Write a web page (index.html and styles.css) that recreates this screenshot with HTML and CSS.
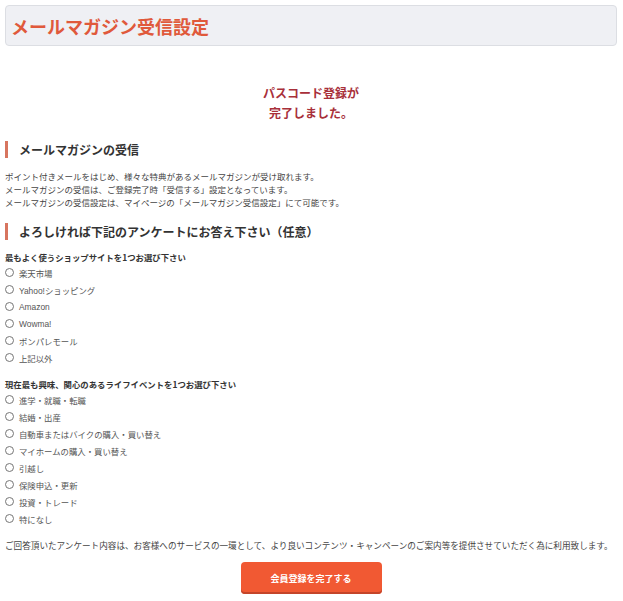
FILE: index.html
```html
<!DOCTYPE html>
<html lang="ja">
<head>
<meta charset="utf-8">
<title>メールマガジン受信設定</title>
<link rel="stylesheet" href="styles.css">
</head>
<body>
<div class="page">
  <header class="page-head">
    <h1 class="page-title">メールマガジン受信設定</h1>
  </header>

  <p class="done-msg">パスコード登録が<br>完了しました。</p>

  <h2 class="sec-title sec-first">メールマガジンの受信</h2>
  <p class="lead">ポイント付きメールをはじめ、様々な特典があるメールマガジンが受け取れます。<br>メールマガジンの受信は、ご登録完了時「受信する」設定となっています。<br>メールマガジンの受信設定は、マイページの「メールマガジン受信設定」にて可能です。</p>

  <h2 class="sec-title sec-second">よろしければ下記のアンケートにお答え下さい（任意）</h2>

  <div class="question">
    <p class="q-label">最もよく使うショップサイトを1つお選び下さい</p>
    <ul class="options">
      <li class="option"><span class="radio"></span>楽天市場</li>
      <li class="option"><span class="radio"></span>Yahoo!ショッピング</li>
      <li class="option"><span class="radio"></span>Amazon</li>
      <li class="option"><span class="radio"></span>Wowma!</li>
      <li class="option"><span class="radio"></span>ポンパレモール</li>
      <li class="option"><span class="radio"></span>上記以外</li>
    </ul>
  </div>

  <div class="question">
    <p class="q-label">現在最も興味、関心のあるライフイベントを1つお選び下さい</p>
    <ul class="options">
      <li class="option"><span class="radio"></span>進学・就職・転職</li>
      <li class="option"><span class="radio"></span>結婚・出産</li>
      <li class="option"><span class="radio"></span>自動車またはバイクの購入・買い替え</li>
      <li class="option"><span class="radio"></span>マイホームの購入・買い替え</li>
      <li class="option"><span class="radio"></span>引越し</li>
      <li class="option"><span class="radio"></span>保険申込・更新</li>
      <li class="option"><span class="radio"></span>投資・トレード</li>
      <li class="option"><span class="radio"></span>特になし</li>
    </ul>
  </div>

  <p class="note">ご回答頂いたアンケート内容は、お客様へのサービスの一環として、より良いコンテンツ・キャンペーンのご案内等を提供させていただく為に利用致します。</p>

  <div class="actions">
    <button class="submit" type="button">会員登録を完了する</button>
  </div>
</div>
</body>
</html>
```

FILE: styles.css
```css
* { box-sizing: border-box; }
html, body { margin: 0; padding: 0; background: #fff; }
body {
  font-family: "Noto Sans CJK JP", "Noto Sans", sans-serif;
  color: #333;
}
.page { padding: 5px 6px 8px 5px; }

.page-head {
  height: 41px;
  background: #eff0f4;
  border: 1px solid #dcdee3;
  border-radius: 4px;
  display: flex;
  align-items: center;
  padding-left: 5px;
}
.page-title {
  margin: 0;
  font-size: 18px;
  line-height: 24px;
  font-weight: bold;
  color: #e0593b;
}

.done-msg {
  margin: 37px 0 0;
  text-align: center;
  font-size: 12px;
  line-height: 20px;
  font-weight: bold;
  color: #a8303a;
}

.sec-title {
  margin: 0;
  border-left: 3px solid #d7755f;
  padding-left: 11px;
  font-size: 12px;
  line-height: 17px;
  font-weight: bold;
  color: #333;
}
.sec-first { margin-top: 18px; }
.sec-second { margin-top: 14px; }

.lead {
  margin: 12px 0 0;
  font-size: 8.5px;
  line-height: 13px;
  color: #444;
}

.question { margin-top: 11px; }
.question + .question { margin-top: 12px; }
.q-label {
  margin: 0;
  font-size: 8.4px;
  line-height: 13px;
  font-weight: bold;
  color: #333;
}
.options { list-style: none; margin: 0; padding: 0; }
.option {
  height: 17px;
  display: flex;
  align-items: center;
  gap: 5px;
  font-family: "Liberation Sans", "Noto Sans CJK JP", sans-serif;
  font-size: 8.4px;
  color: #555;
}
.radio {
  width: 9px;
  height: 9px;
  margin-left: 0;
  border: 1px solid #767676;
  border-radius: 50%;
  background: #fff;
  flex: none;
}

.note {
  margin: 12px 0 0;
  font-size: 8.6px;
  line-height: 13px;
  color: #444;
  white-space: nowrap;
}

.actions {
  display: flex;
  justify-content: center;
  margin-top: 10px;
}
.submit {
  width: 141px;
  height: 32px;
  border: none;
  border-radius: 4px;
  background: #f15933;
  box-shadow: inset 0 -2px 0 #c4452a;
  color: #fff;
  font-family: "Noto Sans CJK JP", sans-serif;
  font-size: 9px;
  font-weight: bold;
  padding: 0;
}
```
